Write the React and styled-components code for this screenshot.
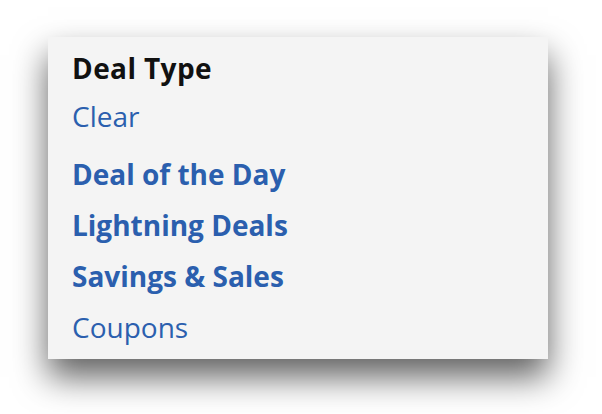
import React from 'react';
import styled, { createGlobalStyle } from 'styled-components';

const GlobalStyle = createGlobalStyle`
  body {
    margin: 0;
    background: #ffffff;
    font-family: "Open Sans", "Noto Sans", sans-serif;
  }
`;

const Page = styled.div`
  width: 602px;
  height: 414px;
  padding: 37px 0 0 48px;
  box-sizing: border-box;
  overflow: hidden;
`;

const Panel = styled.div`
  width: 500px;
  height: 322px;
  box-sizing: border-box;
  padding: 7px 24px 0;
  background: #f4f4f4;
  box-shadow: 0 18px 32px rgba(0, 0, 0, 0.62);
`;

const Heading = styled.div`
  font-size: 28px;
  font-weight: 700;
  line-height: 48px;
  letter-spacing: 0.4px;
  color: #111111;
`;

const ClearLink = styled.a`
  display: block;
  font-size: 28px;
  line-height: 48px;
  color: #2b5fae;
  text-decoration: none;
  margin-bottom: 9px;
`;

const Options = styled.ul`
  list-style: none;
  margin: 0;
  padding: 0;
`;

const Option = styled.li`
  font-size: 28px;
  line-height: 51px;
  font-weight: ${(props) => (props.bold ? 700 : 400)};
  color: #2b5fae;
`;

const options = [
  { label: 'Deal of the Day', bold: true },
  { label: 'Lightning Deals', bold: true },
  { label: 'Savings & Sales', bold: true },
  { label: 'Coupons', bold: false },
];

const App = () => {
  return (
    <Page>
      <GlobalStyle />
      <Panel>
        <Heading>Deal Type</Heading>
        <ClearLink href="#">Clear</ClearLink>
        <Options>
          {options.map((o) => (
            <Option key={o.label} bold={o.bold}>
              {o.label}
            </Option>
          ))}
        </Options>
      </Panel>
    </Page>
  );
};

export default App;
